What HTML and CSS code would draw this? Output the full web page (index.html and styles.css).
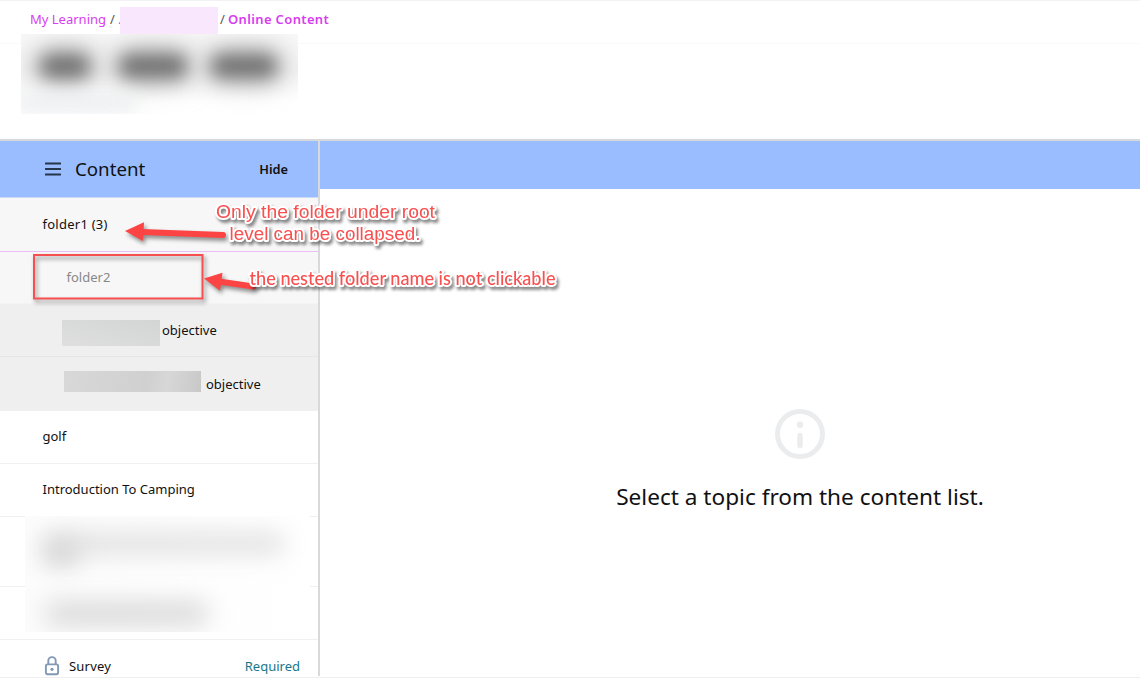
FILE: index.html
```html
<!DOCTYPE html>
<html lang="en">
<head>
    <meta charset="UTF-8">
    <meta name="viewport" content="width=device-width, initial-scale=1.0">
    <title>Online Content</title>
    <link rel="stylesheet" href="styles.css">
</head>
<body>
    <nav class="breadcrumb">
        <a class="crumb crumb-home">My Learning</a>
        <span class="slash">/</span>
        <span class="dot">.</span>
        <span class="crumb-hidden"></span>
        <span class="slash slash-last">/</span>
        <a class="crumb crumb-current">Online Content</a>
    </nav>

    <header class="title-area">
        <div class="title-hidden">
            <span class="smudge word-1"></span>
            <span class="smudge word-2"></span>
            <span class="smudge word-3"></span>
            <span class="smudge word-sub"></span>
        </div>
    </header>

    <main class="course">
        <aside class="sidebar">
            <div class="sidebar-header">
                <svg class="menu-icon" width="16" height="14" viewBox="0 0 16 14">
                    <path d="M0.7 1.5H15.3M0.7 7H15.3M0.7 12.5H15.3" stroke="#263548" stroke-width="1.9" stroke-linecap="round"/>
                </svg>
                <h2>Content</h2>
                <button class="hide-btn">Hide</button>
            </div>
            <div class="row folder-root"><span class="t-folder1">folder1 (3)</span></div>
            <div class="row folder-nested"><span class="t-folder2">folder2</span></div>
            <div class="row objective first">
                <span class="mask mask-1"></span>
                <span class="t-objective">objective</span>
            </div>
            <div class="row objective second">
                <span class="mask mask-2"></span>
                <span class="t-objective">objective</span>
            </div>
            <div class="row"><span class="t-golf">golf</span></div>
            <div class="row"><span class="t-intro">Introduction To Camping</span></div>
            <div class="row tall">
                <div class="row-hidden">
                    <span class="smudge line-1"></span>
                    <span class="smudge line-2"></span>
                    <span class="smudge line-3"></span>
                </div>
            </div>
            <div class="row after-tall"></div>
            <div class="row survey">
                <svg class="lock-icon" width="16" height="20" viewBox="0 0 16 20" fill="none" stroke="#8299b5" stroke-width="1.9">
                    <rect x="1.9" y="8.4" width="12.2" height="9.8" rx="1.6"/>
                    <path d="M4.3 8.2V4.8a3.7 3.7 0 0 1 7.4 0V8.2"/>
                    <circle cx="8" cy="13.3" r="1.6" fill="#8299b5" stroke="none"/>
                </svg>
                <span class="t-survey">Survey</span>
                <span class="required">Required</span>
            </div>
        </aside>

        <section class="viewer">
            <div class="viewer-bar"></div>
            <div class="empty">
                <svg width="50" height="50" viewBox="0 0 50 50">
                    <circle cx="25" cy="25" r="22.5" fill="none" stroke="#ebecee" stroke-width="5"/>
                    <circle cx="25" cy="15.8" r="3.2" fill="#ebecee"/>
                    <path d="M25 26.5V36.5" stroke="#ebecee" stroke-width="5.4" stroke-linecap="round"/>
                </svg>
                <p>Select a topic from the content list.</p>
            </div>
        </section>
    </main>

    <!-- review notes drawn over the page -->
    <svg class="notes" width="1140" height="678" viewBox="0 0 1140 678">
        <g class="shape">
            <rect x="34" y="255" width="168.5" height="43.5" fill="none" stroke="#f85050" stroke-width="2"/>
            <path d="M223 235L142 232" stroke="#fc4444" stroke-width="6" stroke-linecap="round"/>
            <path d="M125 231L144 222.3L143 241Z" fill="#fc4444"/>
            <path d="M253 286.5L219 281.5" stroke="#fc4444" stroke-width="6" stroke-linecap="round"/>
            <path d="M204 278.5L222.5 272.7L220 290.8Z" fill="#fc4444"/>
        </g>
        <g class="note-text">
            <text x="216" y="218" textLength="219" lengthAdjust="spacingAndGlyphs" class="note-arial">Only the folder under root</text>
            <text x="229.5" y="240" textLength="191" lengthAdjust="spacingAndGlyphs" class="note-arial">level can be collapsed.</text>
            <text x="249.5" y="285.3" textLength="306" lengthAdjust="spacingAndGlyphs" class="note-sans">the nested folder name is not clickable</text>
        </g>
    </svg>
</body>
</html>
```
FILE: styles.css
```css
* {
    box-sizing: border-box;
}

body {
    margin: 0;
    height: 678px;
    overflow: hidden;
    display: flex;
    flex-direction: column;
    background: #fff;
    color: #111;
    font-family: 'Noto Sans', sans-serif;
    font-size: 13px;
    border-top: 1px solid #f2f2f2;
    border-bottom: 1px solid #eee;
}

.breadcrumb {
    flex: none;
    height: 43px;
    display: flex;
    align-items: center;
    padding: 0 0 7px 30px;
    border-bottom: 1px solid #fafafa;
}

.crumb {
    color: #d63ef0;
    white-space: nowrap;
}

.crumb-home {
    width: 76px;
}

.crumb-current {
    font-weight: 600;
    letter-spacing: 0.35px;
}

.slash {
    width: 8px;
    margin-left: 4px;
    color: #555;
}

.dot {
    width: 2px;
    color: #d63ef0;
}

.crumb-hidden {
    width: 98px;
    height: 27px;
    margin-top: 4px;
    background: #f9e8fd;
}

.slash-last {
    margin-left: 2px;
}

.title-area {
    flex: none;
    height: 97px;
    padding-left: 21px;
    border-bottom: 2px solid #d6d8db;
}

.title-hidden {
    position: relative;
    width: 277px;
    height: 80px;
    margin-top: -10px;
    overflow: hidden;
    background: linear-gradient(to bottom, #f8f8f8, #f3f3f3 45%, #fff 85%);
}

.smudge {
    position: absolute;
    border-radius: 10px;
    background: #707070;
    filter: blur(9px);
}

.word-1 { left: 19px; top: 20px; width: 50px; height: 24px; }
.word-2 { left: 98px; top: 20px; width: 68px; height: 24px; }
.word-3 { left: 190px; top: 20px; width: 66px; height: 24px; }
.word-1, .word-2, .word-3 { box-shadow: 0 0 22px 3px #aaa; }
.word-sub { left: -8px; top: 62px; width: 125px; height: 15px; background: #e9ebed; }

.course {
    flex: 1;
    display: flex;
    min-height: 0;
}

.sidebar {
    width: 320px;
    height: 535px;
    overflow: hidden;
    border-right: 2px solid #d9d9db;
}

.sidebar-header {
    height: 57px;
    display: flex;
    align-items: center;
    padding: 0 30px 1px 45px;
    background: #99bdff;
    border-bottom: 1px solid #cbdcfa;
}

.sidebar-header h2 {
    margin: 0 0 0 14px;
    font-size: 18.7px;
    font-weight: 400;
}

.hide-btn {
    margin-left: auto;
    padding: 0;
    border: none;
    background: none;
    color: #111;
    font: 600 12.8px 'Noto Sans', sans-serif;
}

.row {
    height: 53px;
    display: flex;
    align-items: center;
    padding: 0 0 2px 42.5px;
    border-bottom: 1px solid #f0f0f0;
    white-space: nowrap;
}

.folder-root {
    height: 54px;
    background: #f7f7f7;
    border-bottom: 1px solid #ebbdf7;
}

.t-folder1 { letter-spacing: 0.25px; }

.folder-nested {
    height: 52px;
    padding: 0 0 1px 66.5px;
    background: #f7f7f7;
    border-bottom-color: #f3f3f3;
    color: #888;
}

.objective {
    padding-bottom: 1px;
    background: #efefef;
    border-bottom-color: #e6e6e6;
}

.first { padding-left: 62px; }

.second {
    height: 54px;
    padding: 0 0 0 64px;
    border-bottom-color: #efefef;
}

.mask {
    margin-right: 2px;
    background: linear-gradient(15deg, #dfdfdf, #d3d4d4);
}

.mask-1 {
    width: 98px;
    height: 26px;
    margin-top: 6px;
}

.mask-2 {
    width: 137px;
    height: 21px;
    margin: -5px 5px 0 0;
    background: linear-gradient(100deg, #d8d8d8, #d0d0d0 60%, #d6d7d6 75%, #c8c8c8);
}

.tall {
    position: relative;
    height: 70px;
}

.row-hidden {
    position: absolute;
    z-index: 1;
    left: 25px;
    top: -1px;
    width: 285px;
    height: 116px;
    overflow: hidden;
    background: linear-gradient(to right, #fcfcfc, #fefefe 70%, #fff);
}

.row-hidden .smudge {
    background: #e0e0e0;
    filter: blur(12px);
}

.row-hidden .line-1 { left: 18px; top: 17px; width: 242px; height: 21px; }
.row-hidden .line-2 { left: 19px; top: 26px; width: 34px; height: 23px; background: #d0d0d0; }
.row-hidden .line-3 { left: 20px; top: 86px; width: 163px; height: 23px; background: #d8d8d8; }

.survey {
    padding: 0 18px 2px 44px;
    border-bottom: none;
}

.t-survey {
    margin-left: 9px;
    letter-spacing: 0.2px;
}

.required {
    margin-left: auto;
    color: #16788a;
}

.viewer {
    flex: 1;
    display: flex;
    flex-direction: column;
}

.viewer-bar {
    flex: none;
    height: 48px;
    background: #99bdff;
}

.empty {
    display: flex;
    flex-direction: column;
    align-items: center;
    padding: 220px 0 0 140px;
}

.empty p {
    margin: 23px 0 0;
    font-size: 22.6px;
    line-height: 30px;
    white-space: nowrap;
}

.notes {
    position: absolute;
    left: 0;
    top: 0;
    z-index: 2;
    pointer-events: none;
}

.shape {
    filter: drop-shadow(2px 3px 2px rgba(0, 0, 0, 0.45));
}

.note-text {
    fill: #f94f4f;
    stroke: #fff;
    stroke-width: 4px;
    stroke-linejoin: round;
    paint-order: stroke;
    filter: drop-shadow(2px 3px 1.5px rgba(0, 0, 0, 0.45));
}

.note-arial {
    font: 19.2px 'Liberation Sans', sans-serif;
}

.note-sans {
    font: 500 18.6px Lato, sans-serif;
}
```
